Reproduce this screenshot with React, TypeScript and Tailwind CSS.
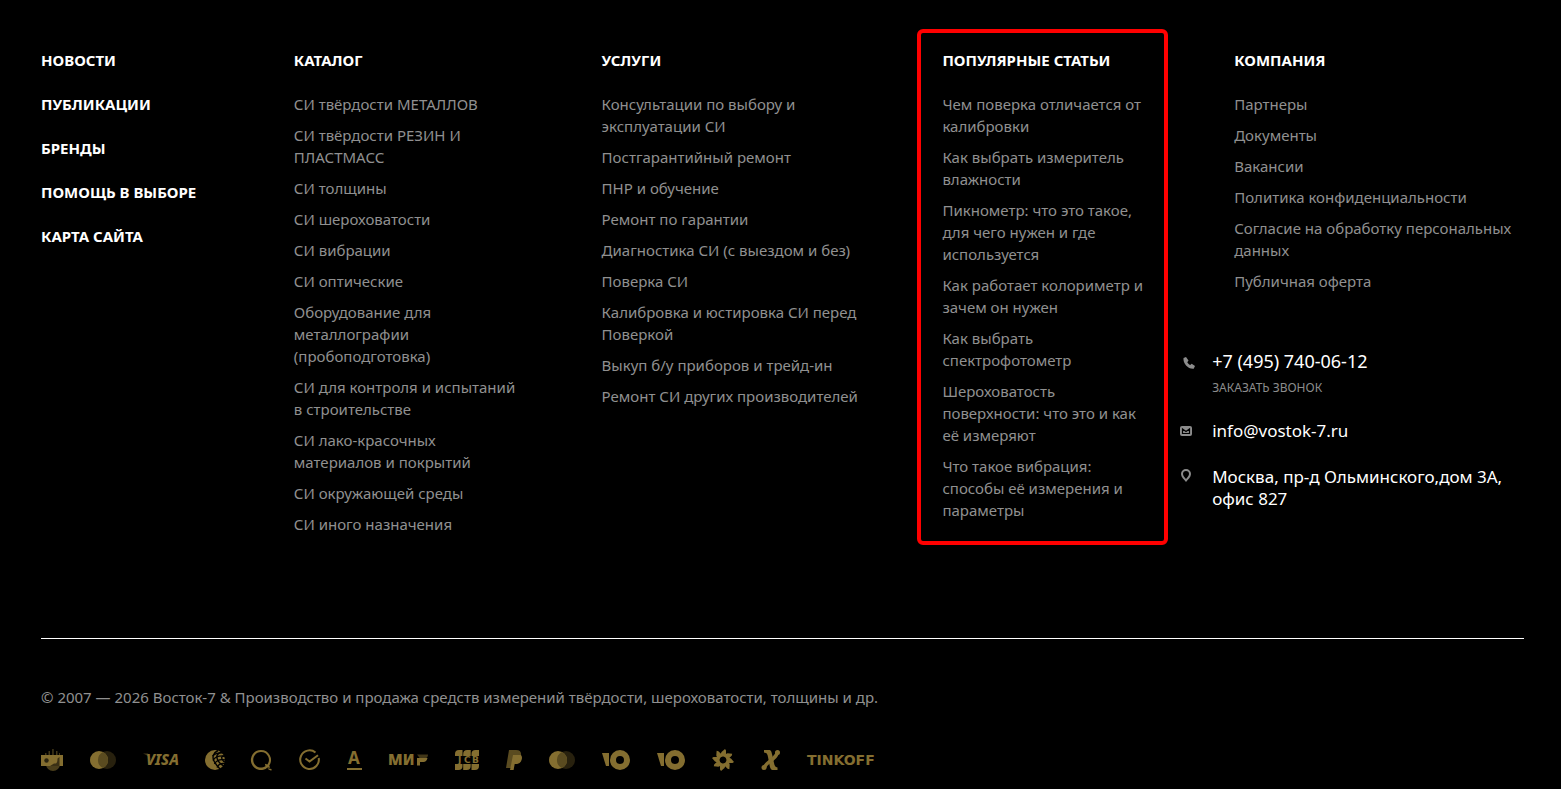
import type { ReactNode } from "react";

const mainLinks = [
  "Новости",
  "Публикации",
  "Бренды",
  "Помощь в выборе",
  "Карта сайта",
];

const catalog = [
  "СИ твёрдости МЕТАЛЛОВ",
  "СИ твёрдости РЕЗИН И ПЛАСТМАСС",
  "СИ толщины",
  "СИ шероховатости",
  "СИ вибрации",
  "СИ оптические",
  "Оборудование для металлографии (пробоподготовка)",
  "СИ для контроля и испытаний в строительстве",
  "СИ лако-красочных материалов и покрытий",
  "СИ окружающей среды",
  "СИ иного назначения",
];

const services = [
  "Консультации по выбору и эксплуатации СИ",
  "Постгарантийный ремонт",
  "ПНР и обучение",
  "Ремонт по гарантии",
  "Диагностика СИ (с выездом и без)",
  "Поверка СИ",
  "Калибровка и юстировка СИ перед Поверкой",
  "Выкуп б/у приборов и трейд-ин",
  "Ремонт СИ других производителей",
];

const articles = [
  "Чем поверка отличается от калибровки",
  "Как выбрать измеритель влажности",
  "Пикнометр: что это такое, для чего нужен и где используется",
  "Как работает колориметр и зачем он нужен",
  "Как выбрать спектрофотометр",
  "Шероховатость поверхности: что это и как её измеряют",
  "Что такое вибрация: способы её измерения и параметры",
];

const company = [
  "Партнеры",
  "Документы",
  "Вакансии",
  "Политика конфиденциальности",
  "Согласие на обработку персональных данных",
  "Публичная оферта",
];

interface LinkColumnProps {
  title: string;
  links: string[];
  className?: string;
}

const LinkColumn = ({ title, links, className }: LinkColumnProps) => (
  <div className={className}>
    <h3 className="font-bold uppercase text-white">
      <a href="#">{title}</a>
    </h3>
    <ul className="mt-[22px] space-y-[9px]">
      {links.map((link) => (
        <li key={link}>
          <a href="#" className="block hover:text-white">
            {link}
          </a>
        </li>
      ))}
    </ul>
  </div>
);

interface LogoProps {
  label: string;
  width: number;
  children: ReactNode;
}

const Logo = ({ label, width, children }: LogoProps) => (
  <svg
    role="img"
    aria-label={label}
    width={width}
    height={22}
    viewBox={`0 0 ${width} 22`}
    fill="currentColor"
    className="shrink-0 overflow-visible"
  >
    {children}
  </svg>
);

const Mastercard = () => (
  <Logo label="Mastercard" width={26}>
    <circle cx="17" cy="11" r="9" opacity="0.3" />
    <circle cx="9" cy="11" r="9" />
    <path d="M13 2.9a9 9 0 0 1 0 16.2a9 9 0 0 1 0-16.2z" fill="#5a4b20" />
  </Logo>
);

const YooMoney = () => (
  <Logo label="ЮMoney" width={28}>
    <path d="M0 4h7v13H4z" />
    <path
      fillRule="evenodd"
      d="M18 1a10 10 0 1 1 0 20a10 10 0 0 1 0-20zm0 6a4 4 0 1 0 0 8a4 4 0 0 0 0-8z"
    />
  </Logo>
);

const petals = [0, 45, 90, 135, 180, 225, 270, 315];

const PaymentLogos = () => (
  <div className="flex flex-wrap items-center gap-[27px] text-[#846e30]">
    <Logo label="Наличные" width={22}>
      <path d="M4 6V4h1.500v2zM7.500 6V2H9v4zM11.200 6V0h1.500v6zM15 6V2h1.500v4zM18 6V4h1v2z" opacity="0.5" />
      <path d="M5 15h14a7 7 0 0 1-14 0z" fill="#4a3e1b" />
      <path d="M0 6h22v11H0z" />
      <circle cx="5.500" cy="11.500" r="2.200" fill="#2b2410" />
      <path d="M9 17l4-2.500c3 .5 3.500-1.500 3.500-5l2-1.500V17z" fill="#3a3015" />
    </Logo>
    <Mastercard />
    <Logo label="Visa" width={35}>
      <path d="M0 4.500h5l3 6C6 7.500 3 5.500 0 4.500z" opacity="0.5" />
      <text x="3" y="16" className="text-[15px] font-extrabold italic">
        VISA
      </text>
    </Logo>
    <Logo label="WebMoney" width={19}>
      <circle cx="10" cy="11" r="10" />
      <g fill="none" stroke="#000" strokeWidth="1.400">
        <path d="M13 1.500C8 4 7 8 9 12s5 7 6 8" />
        <path d="M17 3c-5 1-6 4-4.500 7.500S17 16 19 17" />
        <path d="M20 7c-3 0-4 1-3 3s2 3 3 3" />
        <path d="M7.500 7c3-3 7-3.500 11-3" />
        <path d="M8 11.500c2-4 6-5 12-4.500" />
        <path d="M9.500 15c2-4 6-5 11-4" />
        <path d="M12 18.500c2-4 4-4.500 8-4" />
      </g>
    </Logo>
    <Logo label="QIWI" width={21}>
      <path
        fillRule="evenodd"
        d="M10 1a10 10 0 0 1 8.300 15.500l.7 2.200l-2.400-.3A10 10 0 1 1 10 1zm0 2a7.800 7.800 0 1 0 4.500 14.200l-.6-2.400l2.500.6A7.800 7.800 0 0 0 10 3z"
      />
      <path d="M16.500 19.300l4 .7v1.500c-1.500.2-3-.8-4-2.200z" />
    </Logo>
    <Logo label="SberPay" width={21}>
      <path
        d="M16.500 3.500A9.300 9.300 0 1 0 19.700 9M6.500 9.500l4 3L19 6.200"
        fill="none"
        stroke="currentColor"
        strokeWidth="2"
      />
    </Logo>
    <Logo label="Альфа-Банк" width={15}>
      <text x="1" y="15" className="text-[17px] font-bold">
        А
      </text>
      <path d="M0 19h15v2H0z" />
    </Logo>
    <Logo label="Мир" width={39}>
      <text x="-1" y="16" className="text-[15px] font-black">
        МИ
      </text>
      <path d="M28 5.500h11a4 4 0 0 1-4 4h-4z" opacity="0.5" />
      <path d="M28 9h10.500c-.6 2.500-2 4-4 4H31v3.500h-3z" />
    </Logo>
    <Logo label="JCB" width={24}>
      <path d="M4 1h3.500v16a4 4 0 0 1-4 4H0V5a4 4 0 0 1 4-4zM12.200 1h3.500v16a4 4 0 0 1-4 4H8.200V5a4 4 0 0 1 4-4zM20.500 1H24v16a4 4 0 0 1-4 4h-3.500V5a4 4 0 0 1 4-4z" />
      <path d="M0 7h24v8H0z" fill="#000" />
      <g className="font-['DejaVu_Sans',sans-serif] text-[9px] font-bold">
        <text x="3" y="14">
          J
        </text>
        <text x="9" y="14">
          C
        </text>
        <text x="17" y="14">
          B
        </text>
      </g>
    </Logo>
    <Logo label="PayPal" width={16}>
      <path d="M3 1h7c4 0 5.500 2 5 5.500c-.7 4-3 5.500-6.500 5.500H6.500L5.200 19H0z" fill="#5a4b20" />
      <path d="M7 6h7.800c1.200 1 1.400 2.400 1 4.200c-.8 3.500-3 4.800-6.200 4.800H8.700L7.600 21H4z" />
    </Logo>
    <Mastercard />
    <YooMoney />
    <YooMoney />
    <Logo label="Русский стандарт" width={22}>
      {petals.map((angle) => (
        <path
          key={angle}
          d="M8 6.500L9.500 3L13 0l1 1.500v5l-2.500.8L8 8.500z"
          transform={`rotate(${angle} 11 11)`}
        />
      ))}
    </Logo>
    <Logo label="Халва" width={19}>
      <path d="M3 1h5c2 0 2.500 1.500 3.500 6l1.500 7c.6 2.500 1 4 3.500 4.500V21h-4c-3 0-3.300-2-4.200-6L7 8c-.6-3-1-4-4-4.500z" />
      <path
        d="M16.500 2.500c-.5 5-3 6-6 8.500s-6.500 4-7 8"
        fill="none"
        stroke="currentColor"
        strokeWidth="3.500"
      />
      <circle cx="16.500" cy="3.500" r="2.500" />
      <circle cx="3" cy="18.500" r="2.500" />
    </Logo>
    <Logo label="Тинькофф" width={68}>
      <text x="0" y="16" className="font-['DejaVu_Sans',sans-serif] text-sm font-bold">
        TINKOFF
      </text>
    </Logo>
  </div>
);

const Contacts = () => (
  <address className="-ml-[54px] mt-[58px] grid grid-cols-[32px_1fr] not-italic text-white">
    <svg width="16" height="14" viewBox="0 0 16 14" fill="#8c8c8c" className="mt-[6px]">
      <path d="M3.500 2L6 1l2.500 3.500L7.300 6.200c.5 1.200 1.600 2.200 2.900 2.700l1.500-1.200L15 10l-1.300 2.800C8.500 13.500 2.800 7.500 3.500 2z" />
    </svg>
    <div>
      <a href="#" className="block text-lg leading-[22px]">
        +7 (495) 740-06-12
      </a>
      <button type="button" className="mt-2 block text-xs leading-4 uppercase">
        <span className="text-[#8c8c8c]">Заказать звонок</span>
      </button>
    </div>
    <svg width="12" height="10" viewBox="0 0 12 10" className="mt-[30px]">
      <rect width="12" height="10" rx="2" fill="#8c8c8c" />
      <path d="M2.500 3L6 5.500L9.500 3v4.500h-7z" fill="none" stroke="#000" strokeWidth="1.200" />
    </svg>
    <a href="#" className="mt-6 block text-[17px] leading-[22px]">
      info@vostok-7.ru
    </a>
    <svg width="12" height="13" viewBox="0 0 12 13" className="mt-[27px]">
      <path
        fillRule="evenodd"
        fill="#8c8c8c"
        d="M6 0a5 5 0 0 1 5 5c0 3-3 5.500-5 8C4 10.500 1 8 1 5a5 5 0 0 1 5-5zm0 2a3 3 0 0 0-3 3c0 1.700 1.600 3.300 3 5c1.400-1.700 3-3.300 3-5a3 3 0 0 0-3-3z"
      />
    </svg>
    <p className="mt-6 text-[17px] leading-[22px]">
      Москва, пр-д Ольминского,дом 3А, офис 827
    </p>
  </address>
);

const App = () => {
  return (
    <footer className="min-h-screen bg-black pl-[41px] pr-[37px] pt-[49px] pb-4 font-['Noto_Sans',sans-serif] text-[15px] leading-[22px] text-[#909090]">
      <div className="grid grid-cols-[253fr_308fr_341fr_292fr_290fr]">
        <nav className="flex flex-col gap-[22px] font-bold uppercase text-white">
          {mainLinks.map((link) => (
            <a key={link} href="#">
              {link}
            </a>
          ))}
        </nav>
        <LinkColumn title="Каталог" links={catalog} className="pr-20" />
        <LinkColumn title="Услуги" links={services} className="pr-16" />
        <div className="relative mr-[66px] self-start">
          {/* Highlight frame */}
          <div className="pointer-events-none absolute -top-5 -bottom-6 -left-[25px] right-0 rounded-md border-4 border-[#ff0000]" />
          <LinkColumn title="Популярные статьи" links={articles} className="pr-4" />
        </div>
        <div>
          <LinkColumn title="Компания" links={company} />
          <Contacts />
        </div>
      </div>

      <hr className="mt-[103px] border-white" />

      <p className="mt-[47px]">
        © 2007 — 2026 Восток-7 &amp; Производство и продажа средств измерений
        твёрдости, шероховатости, толщины и др.
      </p>
      <div className="mt-[41px]">
        <PaymentLogos />
      </div>
    </footer>
  );
};

export default App;
